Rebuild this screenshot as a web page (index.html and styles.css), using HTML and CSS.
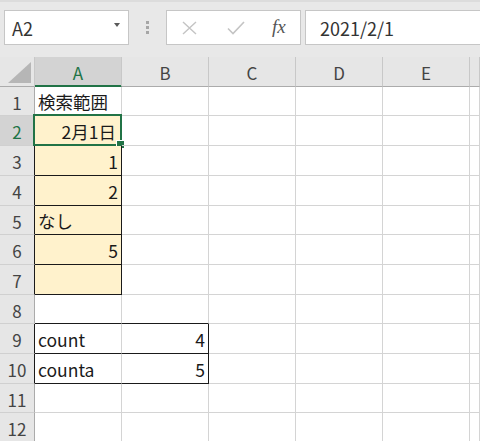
FILE: index.html
```html
<!DOCTYPE html>
<html lang="ja">
<head>
<meta charset="utf-8">
<link rel="stylesheet" href="styles.css">
</head>
<body>
<div class="app">
  <div class="toolbar">
    <div class="namebox">
      <span class="name">A2</span>
      <span class="caret"></span>
    </div>
    <div class="grip"><i></i><i></i><i></i></div>
    <div class="fbuttons">
      <svg class="icon-x" width="15" height="14" viewBox="0 0 15 14"><path d="M1 1 L14 13 M14 1 L1 13" stroke="#c4c4c4" stroke-width="1.4" fill="none"/></svg>
      <svg class="icon-ok" width="18" height="14" viewBox="0 0 18 14"><path d="M1 7.5 L6 12.5 L17 1" stroke="#c4c4c4" stroke-width="1.6" fill="none"/></svg>
      <span class="fx">fx</span>
    </div>
    <div class="finput">2021/2/1</div>
  </div>

  <div class="sheet">
    <div class="corner"><svg width="35" height="30" viewBox="0 0 35 30"><polygon points="8,26 31,26 31,5" fill="#b6b6b6"/></svg></div>
    <div class="ch sel-col">A</div>
    <div class="ch">B</div>
    <div class="ch">C</div>
    <div class="ch">D</div>
    <div class="ch">E</div>
    <div class="ch"></div>

    <div class="rh">1</div>
    <div class="c bb">検索範囲</div><div class="c"></div><div class="c"></div><div class="c"></div><div class="c"></div><div class="c"></div>

    <div class="rh sel-row br">2</div>
    <div class="c fill br bb num active">2月1日</div><div class="c"></div><div class="c"></div><div class="c"></div><div class="c"></div><div class="c"></div>

    <div class="rh br">3</div>
    <div class="c fill br bb num">1</div><div class="c"></div><div class="c"></div><div class="c"></div><div class="c"></div><div class="c"></div>

    <div class="rh br">4</div>
    <div class="c fill br bb num">2</div><div class="c"></div><div class="c"></div><div class="c"></div><div class="c"></div><div class="c"></div>

    <div class="rh br">5</div>
    <div class="c fill br bb">なし</div><div class="c"></div><div class="c"></div><div class="c"></div><div class="c"></div><div class="c"></div>

    <div class="rh br">6</div>
    <div class="c fill br bb num">5</div><div class="c"></div><div class="c"></div><div class="c"></div><div class="c"></div><div class="c"></div>

    <div class="rh br">7</div>
    <div class="c fill br bb"></div><div class="c"></div><div class="c"></div><div class="c"></div><div class="c"></div><div class="c"></div>

    <div class="rh">8</div>
    <div class="c bb"></div><div class="c bb"></div><div class="c"></div><div class="c"></div><div class="c"></div><div class="c"></div>

    <div class="rh br">9</div>
    <div class="c bb">count</div><div class="c br bb num">4</div><div class="c"></div><div class="c"></div><div class="c"></div><div class="c"></div>

    <div class="rh br">10</div>
    <div class="c bb">counta</div><div class="c br bb num">5</div><div class="c"></div><div class="c"></div><div class="c"></div><div class="c"></div>

    <div class="rh">11</div>
    <div class="c"></div><div class="c"></div><div class="c"></div><div class="c"></div><div class="c"></div><div class="c"></div>

    <div class="rh">12</div>
    <div class="c"></div><div class="c"></div><div class="c"></div><div class="c"></div><div class="c"></div><div class="c"></div>
  </div>
</div>
</body>
</html>
```

FILE: styles.css
```css
* { box-sizing: border-box; }
html, body { margin: 0; padding: 0; }
body {
  width: 480px;
  height: 441px;
  overflow: hidden;
  background: #ffffff;
  font-family: "Noto Sans CJK JP", "Noto Sans", sans-serif;
  color: #1a1a1a;
}
.app { width: 480px; }

.toolbar {
  height: 57px;
  background: #e8e8e8;
  border-top: 2px solid #dcdcdc;
  display: flex;
  align-items: flex-start;
  padding: 8px 0 0 4px;
}
.namebox {
  width: 125px;
  height: 35px;
  background: #fff;
  border: 1px solid #c6c6c6;
  display: flex;
  align-items: center;
  justify-content: space-between;
  padding: 0 8px 0 7px;
}
.name { font-size: 18px; color: #333; line-height: 1; }
.caret {
  width: 0; height: 0;
  border-left: 3.5px solid transparent;
  border-right: 3.5px solid transparent;
  border-top: 4px solid #5a5a5a;
  margin-top: -6px;
}
.grip {
  width: 37px;
  height: 35px;
  display: flex;
  flex-direction: column;
  align-items: center;
  justify-content: center;
  gap: 2px;
}
.grip i { display: block; width: 3px; height: 3px; background: #a6a6a6; }
.fbuttons {
  width: 135px;
  height: 35px;
  background: #fff;
  border: 1px solid #c6c6c6;
  display: flex;
  align-items: center;
  padding-left: 15px;
}
.icon-x { margin-right: 30px; }
.icon-ok { margin-right: 27px; }
.fx {
  font-family: "Liberation Serif", serif;
  font-style: italic;
  font-size: 19px;
  color: #555;
  line-height: 1;
  margin-top: -2px;
}
.finput {
  flex: 1;
  height: 35px;
  margin-left: 4px;
  margin-right: -4px;
  background: #fff;
  border: 1px solid #c6c6c6;
  display: flex;
  align-items: center;
  padding-left: 14px;
  font-size: 18px;
  color: #333;
}

.sheet {
  display: grid;
  grid-template-columns: 35px 87px 87px 87px 87px 87px 1fr;
  grid-template-rows: 30px 29px 30px 30px 30px 29px 30px 30px 29px 30px 30px 29px 30px;
}
.corner {
  background: #e6e6e6;
  border-right: 1px solid #c8c8c8;
  border-bottom: 1px solid #ababab;
}
.corner svg { display: block; }
.ch {
  background: #e6e6e6;
  border-right: 1px solid #c8c8c8;
  border-bottom: 1px solid #ababab;
  display: flex;
  align-items: center;
  justify-content: center;
  font-size: 17px;
  color: #444;
  line-height: 1;
  padding-top: 1px;
}
.ch.sel-col {
  background: #d3d3d3;
  color: #217346;
  border-bottom-color: #217346;
  box-shadow: inset 0 -1px 0 #217346;
}
.rh {
  background: #e6e6e6;
  border-right: 1px solid #ababab;
  border-bottom: 1px solid #d0d0d0;
  display: flex;
  align-items: center;
  justify-content: center;
  font-size: 17px;
  color: #444;
  line-height: 1;
  padding-top: 2px;
}
.rh.sel-row {
  background: #d3d3d3;
  color: #217346;
}
.c {
  border-right: 1px solid #d4d4d4;
  border-bottom: 1px solid #d4d4d4;
  display: flex;
  align-items: center;
  padding: 2px 3px 0 3px;
  font-size: 17.5px;
  line-height: 1;
  white-space: nowrap;
  position: relative;
}
.c.num { justify-content: flex-end; }
.c.fill { background: #fff2cc; }
.br { border-right-color: #1a1a1a !important; }
.bb { border-bottom-color: #1a1a1a !important; }
.c.active { padding-right: 5px; }
.c.active::before {
  content: "";
  position: absolute;
  top: -2px; left: -2px; right: -1px; bottom: -1px;
  border: 2px solid #217346;
}
.c.active::after {
  content: "";
  position: absolute;
  right: -4px; bottom: -4px;
  width: 7px; height: 7px;
  background: #217346;
  border: 1px solid #fff;
}
```
